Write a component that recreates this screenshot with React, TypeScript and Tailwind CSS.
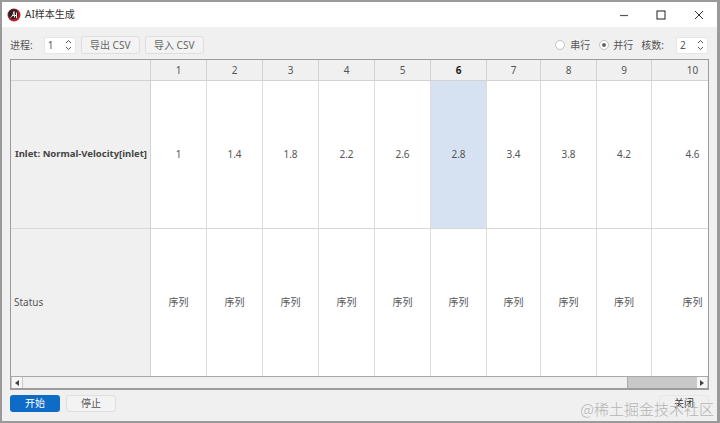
const font = { fontFamily: '"Noto Sans", "Noto Sans CJK SC", sans-serif' };
const values = ['1', '1.4', '1.8', '2.2', '2.6', '2.8', '3.4', '3.8', '4.2', '4.6'];
const cols = ['1', '2', '3', '4', '5', '6', '7', '8', '9', '10'];
const grid = 'grid grid-cols-[140px_56px_56px_56px_56px_56px_56px_54px_56px_55px_82px] w-[767px]';

function Spin({ v }: { v: string }) {
  return (
    <div className="w-[32px] h-[17px] bg-white border border-[#e6e6e6] rounded-[2px] flex items-center justify-between pl-[3px] pr-[3px] text-[10px] text-[#555]">
      <span>{v}</span>
      <svg width="7" height="12" viewBox="0 0 7 12" fill="none" stroke="#555" strokeWidth="1">
        <path d="M1 4 L3.5 1.5 L6 4" />
        <path d="M1 8 L3.5 10.5 L6 8" />
      </svg>
    </div>
  );
}

function Btn({ children }: { children: string }) {
  return (
    <div className="h-[18px] w-[59px] flex items-center justify-center bg-[#f3f3f3] border border-[#dedede] rounded-[3px] text-[10px] text-[#666]">
      {children}
    </div>
  );
}

export default function App() {
  return (
    <div style={font} className="relative w-[720px] h-[423px] bg-[#f0f0f0] border-l-2 border-t-2 border-b-2 border-r-[3px] border-[#9a9a9a] flex flex-col overflow-hidden text-[#555]">
      <div className="h-[25px] bg-white flex items-center shrink-0">
        <svg className="ml-[5px]" width="14" height="14" viewBox="0 0 14 14">
          <circle cx="7" cy="7" r="6.5" fill="#b8202a" />
          <circle cx="6.3" cy="6.2" r="5" fill="#2a2224" />
          <path d="M3.5 9.5 C5 9 6.5 6 7 3.5 L7.6 9.5 M5 7.5 H9 M9.5 4.5 V10" stroke="#f2e6e6" strokeWidth="1" fill="none" />
        </svg>
        <span className="ml-[4px] text-[10px] text-[#333]">AI样本生成</span>
        <div className="ml-auto flex items-center">
          <svg className="mr-[27px]" width="10" height="10" viewBox="0 0 10 10" stroke="#555" fill="none" strokeWidth="1.2"><path d="M1 5.5 H9" /></svg>
          <svg className="mr-[28px]" width="10" height="10" viewBox="0 0 10 10" stroke="#333" fill="none" strokeWidth="1.1"><rect x="1" y="1" width="8" height="8" /></svg>
          <svg className="mr-[13px]" width="10" height="10" viewBox="0 0 10 10" stroke="#333" fill="none" strokeWidth="1"><path d="M1 1 L9 9 M9 1 L1 9" /></svg>
        </div>
      </div>

      <div className="h-[32px] shrink-0 flex items-center pt-[4px] pl-[8px] pr-[9px] text-[10px]">
        <span className="mr-[11px]">进程:</span>
        <Spin v="1" />
        <div className="ml-[5px] mr-[5px]"><Btn>导出 CSV</Btn></div>
        <Btn>导入 CSV</Btn>
        <div className="ml-auto flex items-center">
          <span className="w-[10px] h-[10px] rounded-full bg-white border border-[#c4c4c4] mr-[5px]" />
          <span className="mr-[9px]">串行</span>
          <span className="w-[10px] h-[10px] rounded-full bg-white border border-[#c4c4c4] mr-[4px] flex items-center justify-center">
            <span className="w-[4px] h-[4px] rounded-full bg-[#666]" />
          </span>
          <span className="mr-[8px]">并行</span>
          <span className="mr-[12px]">核数:</span>
          <Spin v="2" />
        </div>
      </div>

      <div className="ml-[8px] mr-[8px] h-[331px] border border-b-2 border-[#9c9c9c] bg-white flex flex-col shrink-0 overflow-hidden">
        <div className="flex-1 overflow-hidden text-[10px]">
          <div className={`${grid} h-[21px] bg-[#f0f0f0] border-b border-[#d2d2d2]`}>
            <div className="border-r border-[#d2d2d2]" />
            {cols.map((c) => (
              <div key={c} className={`border-r border-[#d2d2d2] flex items-center justify-center ${c === '6' ? 'font-bold text-[#222]' : ''}`}>{c}</div>
            ))}
          </div>
          <div className={`${grid} h-[148px] border-b border-[#d8d8d8]`}>
            <div className="bg-[#f0f0f0] border-r border-[#d2d2d2] flex items-center pl-[4px] font-bold text-[#444] text-[9.5px] whitespace-nowrap">Inlet: Normal-Velocity[inlet]</div>
            {values.map((v, i) => (
              <div key={i} className={`border-r border-[#dcdcdc] flex items-center justify-center ${i === 5 ? 'bg-[#d6e2f2]' : ''}`}>{v}</div>
            ))}
          </div>
          <div className={`${grid} h-[147px]`}>
            <div className="bg-[#f0f0f0] border-r border-[#d2d2d2] flex items-center pl-[3px]">Status</div>
            {values.map((_, i) => (
              <div key={i} className="border-r border-[#dcdcdc] flex items-center justify-center">序列</div>
            ))}
          </div>
        </div>
        <div className="h-[12px] shrink-0 bg-[#f0f0f0] border-t border-[#a8a8a8] flex items-stretch">
          <div className="w-[12px] border-x border-[#c8c8c8] bg-[#f6f6f6] flex items-center justify-center">
            <span className="border-y-[3px] border-y-transparent border-r-[4px] border-r-[#444]" />
          </div>
          <div className="w-[605px] border-r border-[#a8a8a8]" />
          <div className="flex-1 bg-[#c8c8c8]" />
          <div className="w-[12px] border-x border-[#c8c8c8] bg-[#f6f6f6] flex items-center justify-center">
            <span className="border-y-[3px] border-y-transparent border-l-[4px] border-l-[#444]" />
          </div>
        </div>
      </div>

      <div className="flex-1 flex items-start pt-[5px] pl-[8px] pr-[8px] text-[10px]">
        <div className="w-[50px] h-[17px] rounded-[3px] bg-[#0f6cc6] text-white flex items-center justify-center">开始</div>
        <div className="ml-[6px] w-[50px] h-[17px] rounded-[3px] bg-[#f3f3f3] border border-[#dedede] flex items-center justify-center">停止</div>
        <div className="ml-auto w-[50px] h-[17px] rounded-[3px] border border-[#e6e6e6] flex items-center justify-center text-[#333]">关闭</div>
      </div>

      <div className="absolute right-[3px] bottom-[1px] text-[15px] font-light text-[#b4b4b4] whitespace-nowrap" style={{ fontFamily: '"Noto Sans CJK SC", sans-serif' }}>@稀土掘金技术社区</div>
    </div>
  );
}
